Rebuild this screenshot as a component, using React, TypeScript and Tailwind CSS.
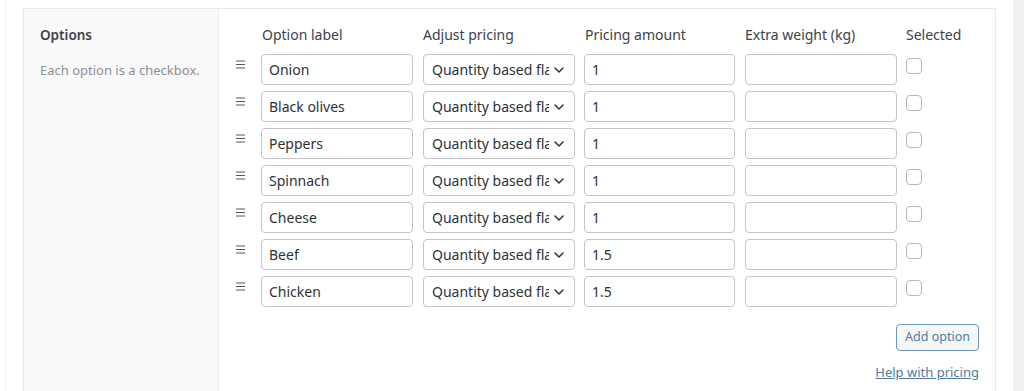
import React from 'react';

const options = [
  { label: 'Onion', amount: '1' },
  { label: 'Black olives', amount: '1' },
  { label: 'Peppers', amount: '1' },
  { label: 'Spinnach', amount: '1' },
  { label: 'Cheese', amount: '1' },
  { label: 'Beef', amount: '1.5' },
  { label: 'Chicken', amount: '1.5' },
];

const font = { fontFamily: '"Segoe UI", "Noto Sans", "Open Sans", sans-serif' };

function Handle() {
  return (
    <svg width="9" height="9" viewBox="0 0 9 9" className="text-[#50575e]">
      <path d="M0 1h9M0 4.5h9M0 8h9" stroke="currentColor" strokeWidth="1" />
    </svg>
  );
}

function Chevron() {
  return (
    <svg width="10" height="6" viewBox="0 0 10 6" className="text-[#2c3338]">
      <path d="M1 1l4 4 4-4" fill="none" stroke="currentColor" strokeWidth="1.5" strokeLinecap="round" strokeLinejoin="round" />
    </svg>
  );
}

function OptionRow({ label, amount }: { label: string; amount: string }) {
  return (
    <div className="flex items-start h-[31px]">
      <div className="w-[28px] pl-[3px] pt-[6px] flex">
        <Handle />
      </div>
      <div className="w-[152px] h-[31px] border border-[#c3c4c7] rounded-[4px] bg-white px-[7px] flex items-center text-[14px] text-[#2c3338]">
        {label}
      </div>
      <div className="ml-[10px] w-[152px] h-[31px] border border-[#c3c4c7] rounded-[4px] bg-white pl-[8px] pr-[10px] flex items-center text-[14px] text-[#2c3338]">
        <span className="flex-1 overflow-hidden whitespace-nowrap">Quantity based flat fee</span>
        <span className="ml-[5px] flex"><Chevron /></span>
      </div>
      <div className="ml-[9px] w-[151px] h-[31px] border border-[#c3c4c7] rounded-[4px] bg-white px-[7px] flex items-center text-[14px] text-[#2c3338]">
        {amount}
      </div>
      <div className="ml-[10px] w-[152px] h-[31px] border border-[#c3c4c7] rounded-[4px] bg-white" />
      <div className="ml-[9px] pt-[4px]">
        <div className="w-[16px] h-[16px] border border-[#b5b7ba] rounded-[4px] bg-white" />
      </div>
    </div>
  );
}

export default function App() {
  return (
    <div className="w-[1024px] h-[391px] bg-white flex overflow-hidden" style={font}>
      <div className="w-[23px] flex">
        <div className="ml-[5px] w-[1px] bg-[#f2f2f2]" />
      </div>
      <div className="w-[973px] mt-[8px] border-t border-l border-r border-[#e9e9ea] flex">
        <div className="w-[195px] bg-[#f9f9f9] border-r border-[#ececec] pl-[16px] pt-[16px]">
          <div className="text-[13.5px] font-semibold text-[#3c434a] leading-[20px]">Options</div>
          <div className="mt-[15px] text-[13px] text-[#8c8f94] leading-[20px]">Each option is a checkbox.</div>
        </div>
        <div className="flex-1 pl-[14px] pt-[16px] pr-[16px]">
          <div className="flex text-[14px] text-[#3c434a] leading-[20px]">
            <div className="w-[28px]" />
            <div className="w-[152px] pl-[1px]">Option label</div>
            <div className="ml-[10px] w-[152px]">Adjust pricing</div>
            <div className="ml-[9px] w-[151px] pl-[1px]">Pricing amount</div>
            <div className="ml-[10px] w-[152px]">Extra weight (kg)</div>
            <div className="ml-[9px]">Selected</div>
          </div>
          <div className="mt-[9px] flex flex-col gap-[6px]">
            {options.map((o) => (
              <OptionRow key={o.label} label={o.label} amount={o.amount} />
            ))}
          </div>
          <div className="mt-[17px] flex flex-col items-end">
            <button className="h-[27px] px-[8px] border border-[#6f97bd] rounded-[4px] bg-[#f6f7f7] text-[12.5px] text-[#4f7aa3]">
              Add option
            </button>
            <a href="#" className="mt-[11px] text-[13px] leading-[20px] text-[#4f7aa3] underline">
              Help with pricing
            </a>
          </div>
        </div>
      </div>
      <div className="w-[17px]" />
      <div className="w-[11px] bg-[#f0f0f1]" />
    </div>
  );
}
